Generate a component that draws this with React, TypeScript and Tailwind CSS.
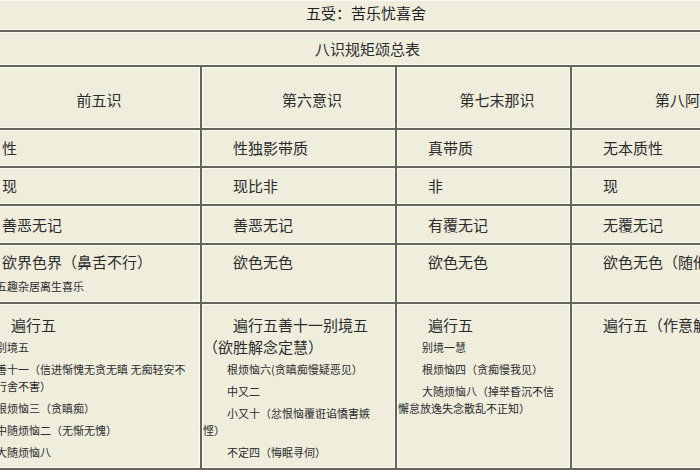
import React from "react";

const cell = "bg-[#efeedd] border border-[#fbfbf3]";
const small = "text-[11px] leading-[17px]";

export default function App() {
  return (
    <div className="w-[700px] h-[470px] overflow-hidden bg-[#efeedd] text-[#2c2c2c] font-['Noto_Sans_CJK_SC','Noto_Sans_CJK_JP',sans-serif]">
      <div className="ml-[-29px] w-[830px] grid grid-cols-[229px_193px_173px_229px] grid-rows-[30px_33px_61px_36px_36px_37px_57px_164px] gap-[2px] pb-[2px] bg-[#64645a] text-[15px]">
        {/* title rows */}
        <div className={`${cell} col-span-4 flex items-center pl-[334px] pb-[3px] text-[#1e1e1e]`}>
          五受：苦乐忧喜舍
        </div>
        <div className={`${cell} col-span-4 flex items-center pl-[343px] pt-[2px]`}>
          八识规矩颂总表
        </div>

        {/* header */}
        {["前五识", "第六意识", "第七末那识", "第八阿赖耶识"].map((h) => (
          <div key={h} className={`${cell} flex items-center justify-center pl-[27px] pt-[5px]`}>
            <span className="whitespace-nowrap">{h}</span>
          </div>
        ))}

        {/* simple rows */}
        {[
          ["性", "性独影带质", "真带质", "无本质性"],
          ["现", "现比非", "非", "现"],
          ["善恶无记", "善恶无记", "有覆无记", "无覆无记"],
        ].map((row, i) =>
          row.map((t, j) => (
            <div key={`${i}-${j}`} className={`${cell} flex items-center pl-[30px] pt-[1px]`}>
              <span className="whitespace-nowrap">{t}</span>
            </div>
          ))
        )}

        {/* realm row */}
        <div className={`${cell} pt-[4px]`}>
          <div className="leading-[24px] pl-[30px] whitespace-nowrap">欲界色界（鼻舌不行）</div>
          <div className={`${small} mt-[4px] indent-[24px] whitespace-nowrap`}>五趣杂居离生喜乐</div>
        </div>
        <div className={`${cell} pt-[4px]`}>
          <div className="leading-[24px] pl-[30px] whitespace-nowrap">欲色无色</div>
        </div>
        <div className={`${cell} pt-[4px]`}>
          <div className="leading-[24px] pl-[30px] whitespace-nowrap">欲色无色</div>
        </div>
        <div className={`${cell} pt-[4px]`}>
          <div className="leading-[24px] pl-[30px] whitespace-nowrap">欲色无色（随他业力生）</div>
        </div>

        {/* mental factors row */}
        <div className={`${cell} pt-[9px]`}>
          <div className="leading-[22px] indent-[39px] whitespace-nowrap">遍行五</div>
          <div className={`${small} mt-[3px] indent-[24px] whitespace-nowrap`}>别境五</div>
          <div className={`${small} mt-[5px] whitespace-nowrap`}>
            <div className="indent-[24px]">善十一（信进惭愧无贪无瞋 无痴轻安不</div>
            <div className="indent-[24px]">行舍不害）</div>
          </div>
          <div className={`${small} mt-[5px] indent-[24px] whitespace-nowrap`}>根烦恼三（贪瞋痴）</div>
          <div className={`${small} mt-[5px] indent-[24px] whitespace-nowrap`}>中随烦恼二（无惭无愧）</div>
          <div className={`${small} mt-[5px] indent-[24px] whitespace-nowrap`}>大随烦恼八</div>
        </div>
        <div className={`${cell} pt-[9px]`}>
          <div className="leading-[22px] indent-[30px] whitespace-nowrap">
            遍行五善十一别境五
            <br />
            （欲胜解念定慧）
          </div>
          <div className={`${small} mt-[3px] indent-[24px] whitespace-nowrap`}>根烦恼六(贪瞋痴慢疑恶见）</div>
          <div className={`${small} mt-[5px] indent-[24px] whitespace-nowrap`}>中又二</div>
          <div className={`${small} mt-[5px] indent-[24px] whitespace-nowrap`}>
            小又十（忿恨恼覆诳谄憍害嫉
            <br />
            悭）
          </div>
          <div className={`${small} mt-[5px] indent-[24px] whitespace-nowrap`}>不定四（悔眠寻伺）</div>
        </div>
        <div className={`${cell} pt-[9px]`}>
          <div className="leading-[22px] indent-[30px] whitespace-nowrap">遍行五</div>
          <div className={`${small} mt-[3px] indent-[24px] whitespace-nowrap`}>别境一慧</div>
          <div className={`${small} mt-[5px] indent-[24px] whitespace-nowrap`}>根烦恼四（贪痴慢我见）</div>
          <div className={`${small} mt-[5px] indent-[24px] whitespace-nowrap`}>
            大随烦恼八（掉举昏沉不信
            <br />
            懈怠放逸失念散乱不正知）
          </div>
        </div>
        <div className={`${cell} pt-[9px]`}>
          <div className="leading-[22px] indent-[30px] whitespace-nowrap">遍行五（作意触受想思）</div>
        </div>
      </div>
    </div>
  );
}
